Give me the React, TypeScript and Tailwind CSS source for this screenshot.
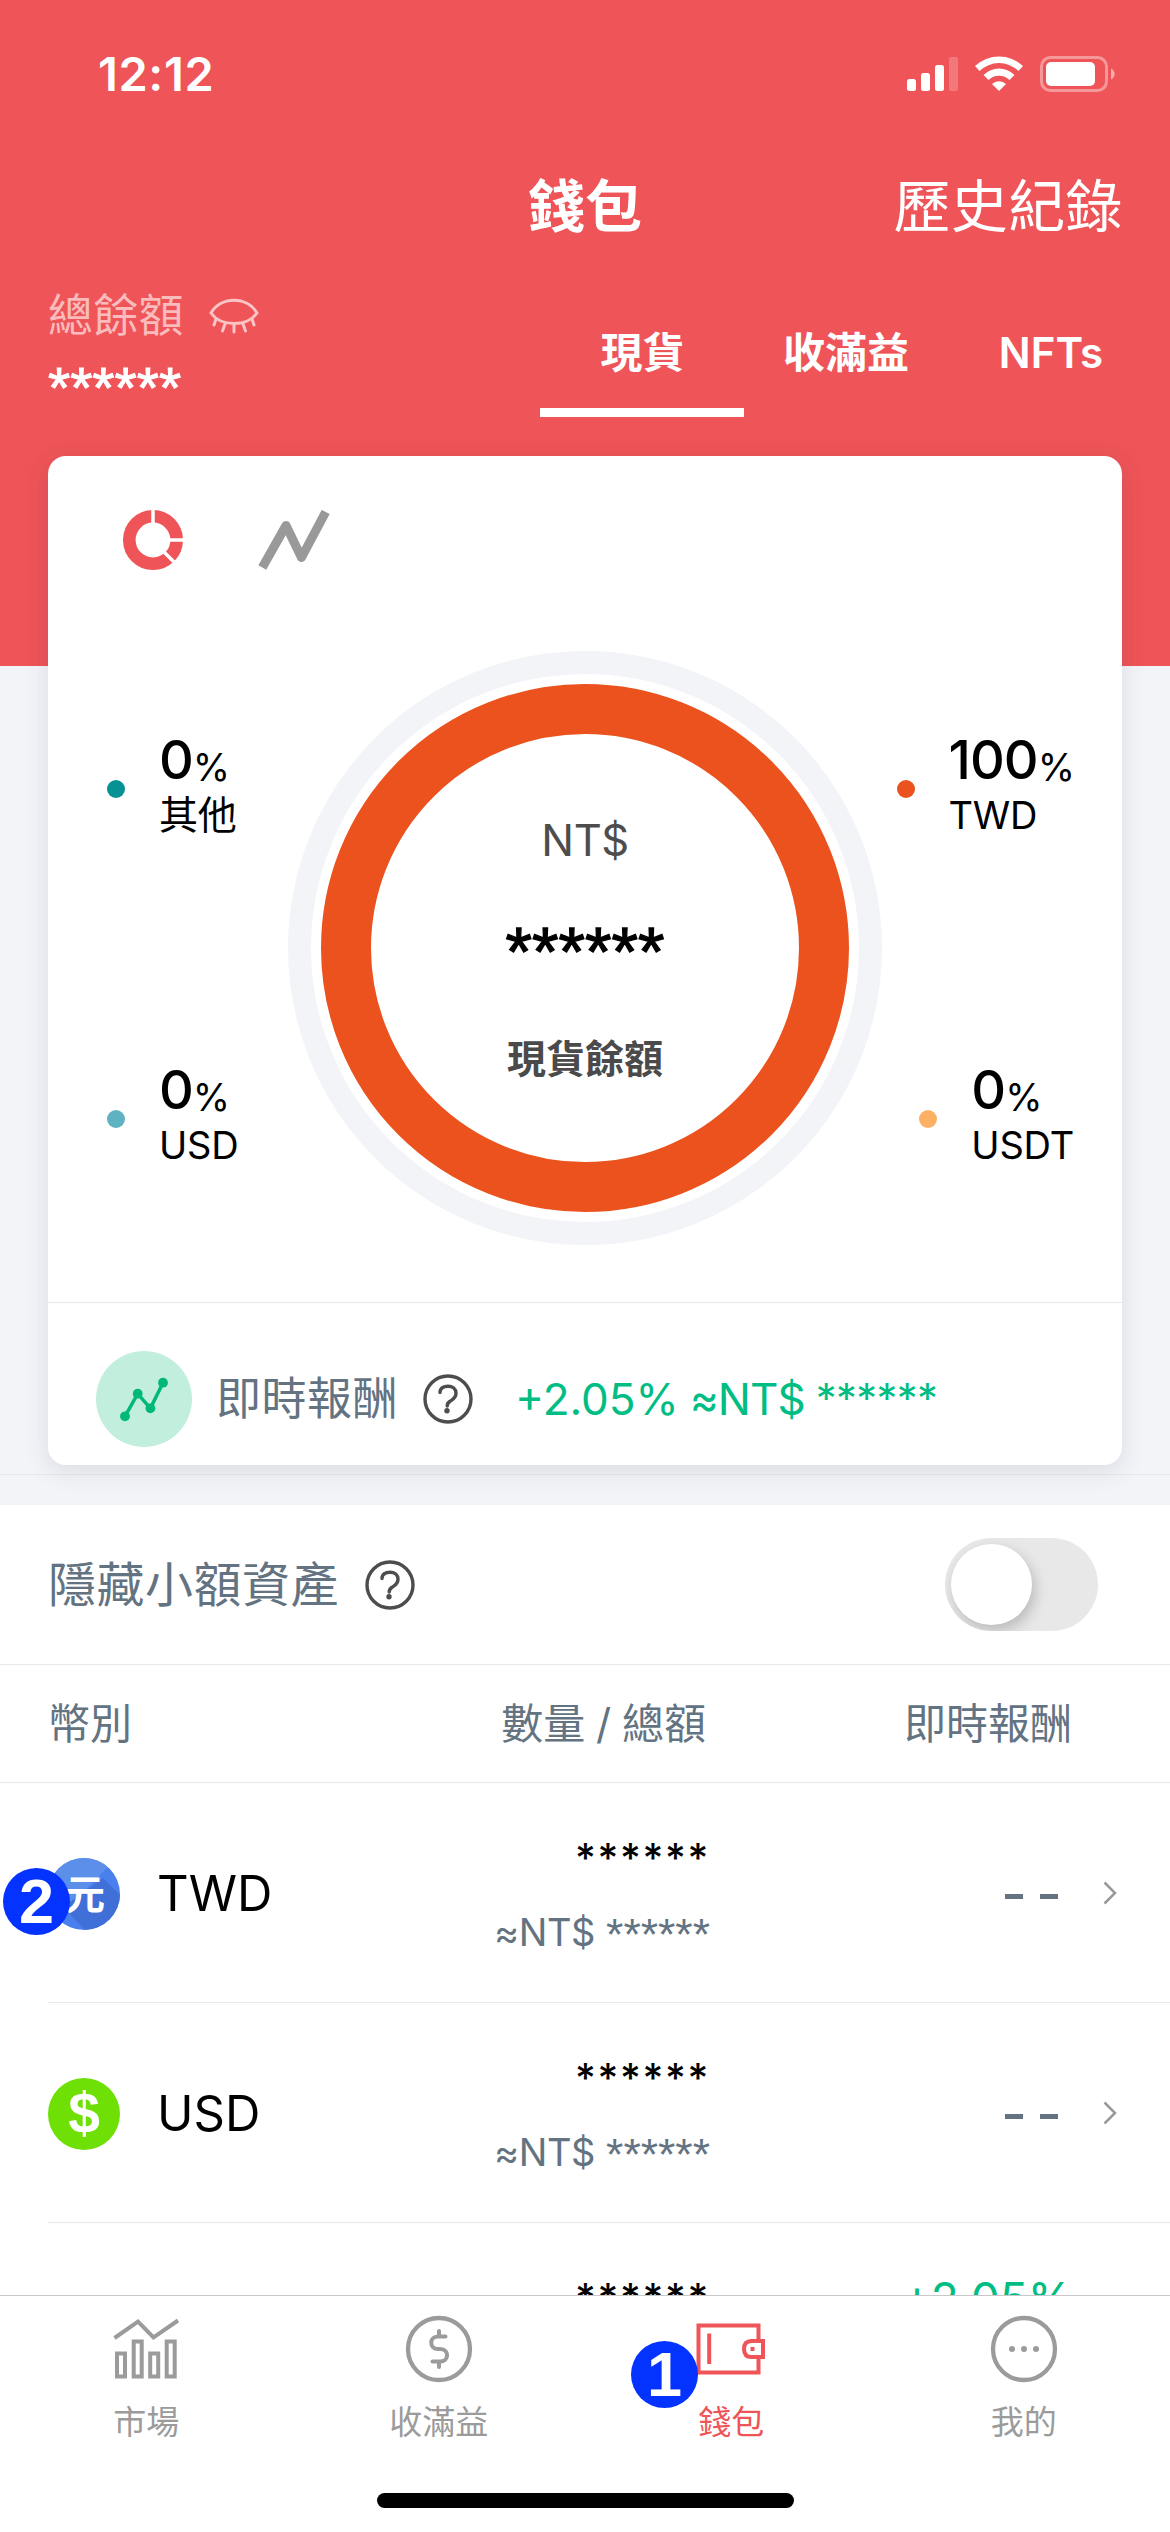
import React from "react";

const Help = () => (
  <svg width="50" height="50" viewBox="0 0 50 50" fill="none" stroke="#4d4d4d" strokeWidth="3.4" className="block shrink-0">
    <circle cx="25" cy="25" r="23" />
    <path d="M17 18.5C17 14 20.5 12.2 25 12.2s8 2.800 8 7c0 5-3.500 6.300-6.300 8.300C24.600 29 24.200 30 24.200 32" strokeLinecap="round" />
    <circle cx="24" cy="36.700" r="2.700" fill="#4d4d4d" stroke="none" />
  </svg>
);

const Legend = ({ dot, value, name, className }: { dot: string; value: string; name: React.ReactNode; className: string }) => (
  <div className={`absolute flex items-center text-black ${className}`}>
    <span className={`mr-[34px] mt-[2px] size-[18px] rounded-full ${dot}`} />
    <div className="flex flex-col">
      <div className="flex h-[54px] items-baseline leading-[54px]">
        <span className="text-[54px] font-medium tracking-[-1px]">{value}</span>
        <span className="relative top-[2px] text-[38px] tracking-[-1px]">%</span>
      </div>
      <span className="h-[56px] text-[38px] leading-[56px] tracking-[-0.2px]">{name}</span>
    </div>
  </div>
);

const Twd = () => (
  <svg width="72" height="72" viewBox="0 0 72 72" className="block shrink-0">
    <clipPath id="coin-clip"><circle cx="36" cy="36" r="36" /></clipPath>
    <g clipPath="url(#coin-clip)">
      <rect width="72" height="72" fill="#4a80ee" />
      <path d="M0 0H69L0 69Z" fill="#5b8fe9" />
      <path d="M55 20L76 41L60 76L40 75L15 49Z" fill="#406fd7" />
    </g>
    <text x="37" y="51" textAnchor="middle" fill="#fff" fontSize="40" fontWeight="700" fontFamily="Noto Sans CJK TC, sans-serif">元</text>
  </svg>
);

const Usd = () => (
  <svg width="72" height="72" viewBox="0 0 72 72" className="block shrink-0">
    <circle cx="36" cy="36" r="36" fill="#6ee006" />
    <text x="36" y="55" textAnchor="middle" fill="#fff" fontSize="57" fontWeight="700" fontFamily="Liberation Sans, sans-serif">$</text>
  </svg>
);

const Row = ({ icon, name, badge }: { icon: React.ReactNode; name: string; badge?: React.ReactNode }) => (
  <div className="relative ml-12 flex h-[220px] items-center border-b border-[#e8e8e8] pt-[2px]">
    {icon}
    {badge}
    <span className="ml-[37px] w-[160px] text-[49px] leading-none text-black">{name}</span>
    <div className="flex w-[393px] flex-col items-end">
      <span className="mt-[2px] h-[74px] text-[40px] font-medium leading-[74px] tracking-[1.7px] text-black">******</span>
      <span className="flex h-[74px] text-[38px] leading-[74px] text-[#637381]">
        <span className="mr-[11px] tracking-[-0.4px]">≈NT$</span>
        <span className="pt-[3px] font-['Liberation_Sans'] text-[44.5px]">******</span>
      </span>
    </div>
    <span className="ml-auto flex gap-[17px] pt-[5px]">
      <span className="h-[5px] w-[18px] bg-[#637381]" />
      <span className="h-[5px] w-[18px] bg-[#637381]" />
    </span>
    <svg width="14" height="24" viewBox="0 0 14 24" fill="none" stroke="#999" strokeWidth="2.500" className="mb-[2px] ml-[45px] mr-[53px]">
      <path d="M1.500 1.500L12 12L1.500 22.500" />
    </svg>
  </div>
);

const Badge = ({ n, className }: { n: string; className: string }) => (
  <span className={`absolute flex size-[67px] items-center justify-center rounded-full bg-[#0433ff] font-['Liberation_Sans'] text-[63px] font-bold leading-none text-white ${className}`}>{n}</span>
);

const Tab = ({ label, active, children }: { label: string; active?: boolean; children: React.ReactNode }) => (
  <div className={`relative flex flex-1 flex-col items-center ${active ? "text-[#ee5458]" : "text-[#9b9b9b]"}`}>
    <div className="mt-[18px] h-[70px]">{children}</div>
    <span className="mt-[14px] text-[33px] leading-[48px]">{label}</span>
  </div>
);

export default function App() {
  return (
    <div className="relative flex h-[2532px] w-[1170px] flex-col overflow-hidden bg-white font-['Inter','Noto_Sans_CJK_TC',sans-serif]">
      <header className="h-[666px] shrink-0 bg-[#ee5458] text-white">
        <div className="flex h-[150px] items-start justify-between pl-[98px] pr-[54px]">
          <span className="mt-[50px] text-[47px] font-semibold leading-[48px] tracking-[0.6px]">12:12</span>
          <svg width="210" height="40" viewBox="906 54 210 40" className="mt-[54px] block" fill="#fff">
            <rect x="907" y="79" width="9" height="12" rx="2.500" />
            <rect x="921" y="73" width="9" height="18" rx="2.500" />
            <rect x="935" y="65" width="9" height="26" rx="2.500" />
            <rect x="949" y="57" width="9" height="34" rx="2.500" opacity=".22" />
            <path d="M975 66A35 35 0 0 1 1023 66L1018.500 71A28 28 0 0 0 979.500 71Z" />
            <path d="M983.500 75A22 22 0 0 1 1014.500 75L1009.500 80A15 15 0 0 0 988.500 80Z" />
            <path d="M992 84A10 10 0 0 1 1006 84L999 91Z" />
            <rect x="1041.500" y="57.500" width="65" height="33" rx="9" fill="none" stroke="#fff" strokeWidth="3" opacity=".4" />
            <rect x="1046" y="62" width="49" height="24" rx="5" />
            <path d="M1111 68.500A6 6 0 0 1 1111 79.500Z" opacity=".5" />
          </svg>
        </div>
        <div className="grid h-[116px] grid-cols-3 items-center px-12 pb-[4px]">
          <span />
          <h1 className="text-center text-[57px] font-bold leading-none">錢包</h1>
          <span className="-mr-px text-right text-[57px] leading-none tracking-[0.4px]">歷史紀錄</span>
        </div>
        <div className="flex justify-between pl-12 pr-[18px]">
          <div className="flex flex-col pt-[20px]">
            <div className="flex items-center">
              <span className="text-[45px] leading-[60px] tracking-[0.3px] text-[#f9bbbc]">總餘額</span>
              <svg width="50" height="36" viewBox="0 0 50 36" fill="none" stroke="#fbc4c5" strokeWidth="3" strokeLinecap="round" className="ml-[25px]">
                <path d="M2 15C12-2 38-2 48 15C38 29 12 29 2 15Z" strokeLinejoin="round" />
                <path d="M7 21L5 27M16 26L13.500 33M25 27V34M34 26L36.500 33M43 21L45 27" />
              </svg>
            </div>
            <span className="mt-[12px] font-['Liberation_Sans'] text-[57px] leading-[60px] [-webkit-text-stroke:1px]">******</span>
          </div>
          <nav className="flex text-[42px] font-semibold">
            <span className="h-[151px] w-[204px] border-b-[9px] border-white pl-px pt-[57px] text-center leading-[60px]">現貨</span>
            <span className="w-[204px] pt-[57px] text-center leading-[60px]">收滿益</span>
            <span className="w-[204px] pl-[2px] pt-[57px] text-center leading-[60px]">NFTs</span>
          </nav>
        </div>
      </header>

      <div className="h-[839px] shrink-0 bg-[#f3f4f8] px-12">
        <div className="-mx-12 h-[1019px] border-b border-[#e8e8e8]">
          <section className="relative mx-12 -mt-[210px] flex h-[1009px] flex-col rounded-[18px] bg-white shadow-[0_6px_24px_rgba(60,60,90,0.13)]">
            <div className="flex gap-[74px] pl-[75px] pt-[54px]">
              <svg width="60" height="60" viewBox="0 0 60 60">
                <circle cx="30" cy="30" r="23.700" fill="none" stroke="#ee5458" strokeWidth="12.600" />
                <path d="M30 0V18M42 30H60M41 42L52 53" stroke="#fff" strokeWidth="3.500" />
              </svg>
              <svg width="74" height="64" viewBox="257 510 74 64" fill="none" stroke="#999" strokeWidth="9" strokeLinejoin="round">
                <path d="M262.300 567.500L286 525.500L301.500 557.500L325.700 512" />
              </svg>
            </div>
            <svg width="594" height="594" viewBox="0 0 594 594" fill="none" className="absolute left-[240px] top-[195px]">
              <circle cx="297" cy="297" r="285.500" stroke="#f3f4f8" strokeWidth="23" />
              <circle cx="297" cy="297" r="239" stroke="#eb521e" strokeWidth="50" />
            </svg>
            <div className="absolute left-[240px] top-[195px] flex w-[594px] flex-col items-center">
              <span className="mt-[159px] text-[43.5px] leading-[60px] tracking-[-0.5px] text-[#4d4d4d]">NT$</span>
              <span className="mt-[51px] font-['Liberation_Sans'] text-[68px] leading-[60px] text-black [-webkit-text-stroke:1.3px]">******</span>
              <span className="mt-[48px] text-[39px] font-semibold leading-[60px] text-[#4a4a4a]">現貨餘額</span>
            </div>
            <Legend dot="bg-[#069292]" value="0" name={<span className="text-[39px]">其他</span>} className="left-[59px] top-[277px]" />
            <Legend dot="bg-[#eb521e]" value="100" name="TWD" className="right-[48px] top-[277px]" />
            <Legend dot="bg-[#5fb2c1]" value="0" name="USD" className="left-[59px] top-[607px]" />
            <Legend dot="bg-[#fcb064]" value="0" name="USDT" className="right-[48px] top-[607px]" />
            <div className="mt-auto flex h-[163px] items-center border-t border-[#e8e8e8] pl-12 pt-[29px]">
              <svg width="96" height="96" viewBox="96 1351 96 96">
                <circle cx="144" cy="1399" r="48" fill="#c2eedd" />
                <path d="M125 1416.300L137.700 1393.700L150.400 1408.300L163 1382.700" fill="none" stroke="#00b978" strokeWidth="3.500" />
                <g fill="#00b978"><circle cx="125" cy="1416.300" r="4.900" /><circle cx="137.700" cy="1393.700" r="4.900" /><circle cx="150.400" cy="1408.300" r="4.900" /><circle cx="163" cy="1382.700" r="4.900" /></g>
              </svg>
              <span className="ml-[24px] mr-[25px] text-[45px] leading-none tracking-[0.5px] text-[#637381]">即時報酬</span>
              <Help />
              <span className="ml-[42px] flex items-center gap-[11px] text-[44px] leading-none text-[#00bd83]">
                <span>+2.05%</span>
                <span className="tracking-[-1px]">≈NT$</span>
                <span className="text-[41.5px] tracking-[-0.5px]">******</span>
              </span>
            </div>
          </section>
        </div>
      </div>

      <div className="flex h-[160px] shrink-0 items-center border-b border-[#e8e8e8] pl-12 pr-[72px] text-[48px] text-[#637381]">
        <span className="mr-[26px] leading-none tracking-[0.5px]">隱藏小額資產</span>
        <Help />
        <span className="ml-auto h-[93px] w-[153px] overflow-hidden rounded-full bg-[#e8e8e8] p-[6px]">
          <span className="block size-[81px] rounded-full bg-white shadow-[3px_6px_14px_rgba(0,0,0,0.2)]" />
        </span>
      </div>
      <div className="flex h-[118px] shrink-0 items-center border-b border-[#e8e8e8] pl-12 pr-[98px] text-[42px] leading-none text-[#637381]">
        <span className="w-[300px]">幣別</span>
        <span className="w-[358px] text-right [word-spacing:-1px]">數量 / 總額</span>
        <span className="ml-auto">即時報酬</span>
      </div>
      <div className="h-[512px] shrink-0 overflow-hidden">
        <Row icon={<Twd />} name="TWD" badge={<Badge n="2" className="left-[-45px] top-[85px]" />} />
        <Row icon={<Usd />} name="USD" />
        <div className="ml-12 flex">
          <span className="mt-[38px] w-[662px] text-right text-[40px] font-medium leading-[74px] tracking-[1.700px] text-black">******</span>
          <span className="mt-[39px] w-[363px] text-right text-[46px] leading-[74px] text-[#00bd83]">+2.05%</span>
        </div>
      </div>

      <nav className="relative flex h-[237px] shrink-0 border-t border-[#c8c8c8] bg-white">
        <Tab label="市場">
          <svg width="70" height="70" viewBox="111 2314 70 70" fill="none" stroke="currentColor" strokeWidth="4">
            <path d="M114.500 2338L138 2321.500L153.500 2337.500L178 2320.500" />
            <path d="M117 2353.500h8v23h-8zM133.700 2341.500h8v35h-8zM150.200 2353.500h8v23h-8zM166.700 2341.500h8v35h-8z" />
          </svg>
        </Tab>
        <Tab label="收滿益">
          <svg width="70" height="70" viewBox="0 0 70 70" fill="none" stroke="currentColor" strokeWidth="4.300" strokeLinecap="round">
            <circle cx="35" cy="35" r="31" />
            <path d="M41.500 22.500H34C25 22.500 25 35 34 35H36C45.500 35 45.500 47.500 36 47.500H28.500M35 17V22.500M35 47.500V53" strokeWidth="4" />
          </svg>
        </Tab>
        <Tab label="錢包" active>
          <svg width="72" height="70" viewBox="695 2314 72 70" fill="none" stroke="currentColor" strokeWidth="4">
            <path d="M758.500 2340V2325.500H698.500V2372.500H758.500V2358M709.200 2333.500V2364" />
            <path d="M763 2341H751.500Q744 2341 744 2349T751.500 2357H763Z" />
            <rect x="750.500" y="2347" width="4" height="4" fill="currentColor" stroke="none" />
          </svg>
          <Badge n="1" className="left-[46px] top-[45px]" />
        </Tab>
        <Tab label="我的">
          <svg width="70" height="70" viewBox="0 0 70 70" fill="none" stroke="currentColor" strokeWidth="4.300">
            <circle cx="35" cy="35" r="31" />
            <g fill="currentColor" stroke="none"><circle cx="23" cy="35" r="3" /><circle cx="35" cy="35" r="3" /><circle cx="47" cy="35" r="3" /></g>
          </svg>
        </Tab>
        <span className="absolute left-[377px] top-[197px] h-[15px] w-[417px] rounded-full bg-black" />
      </nav>
    </div>
  );
}
